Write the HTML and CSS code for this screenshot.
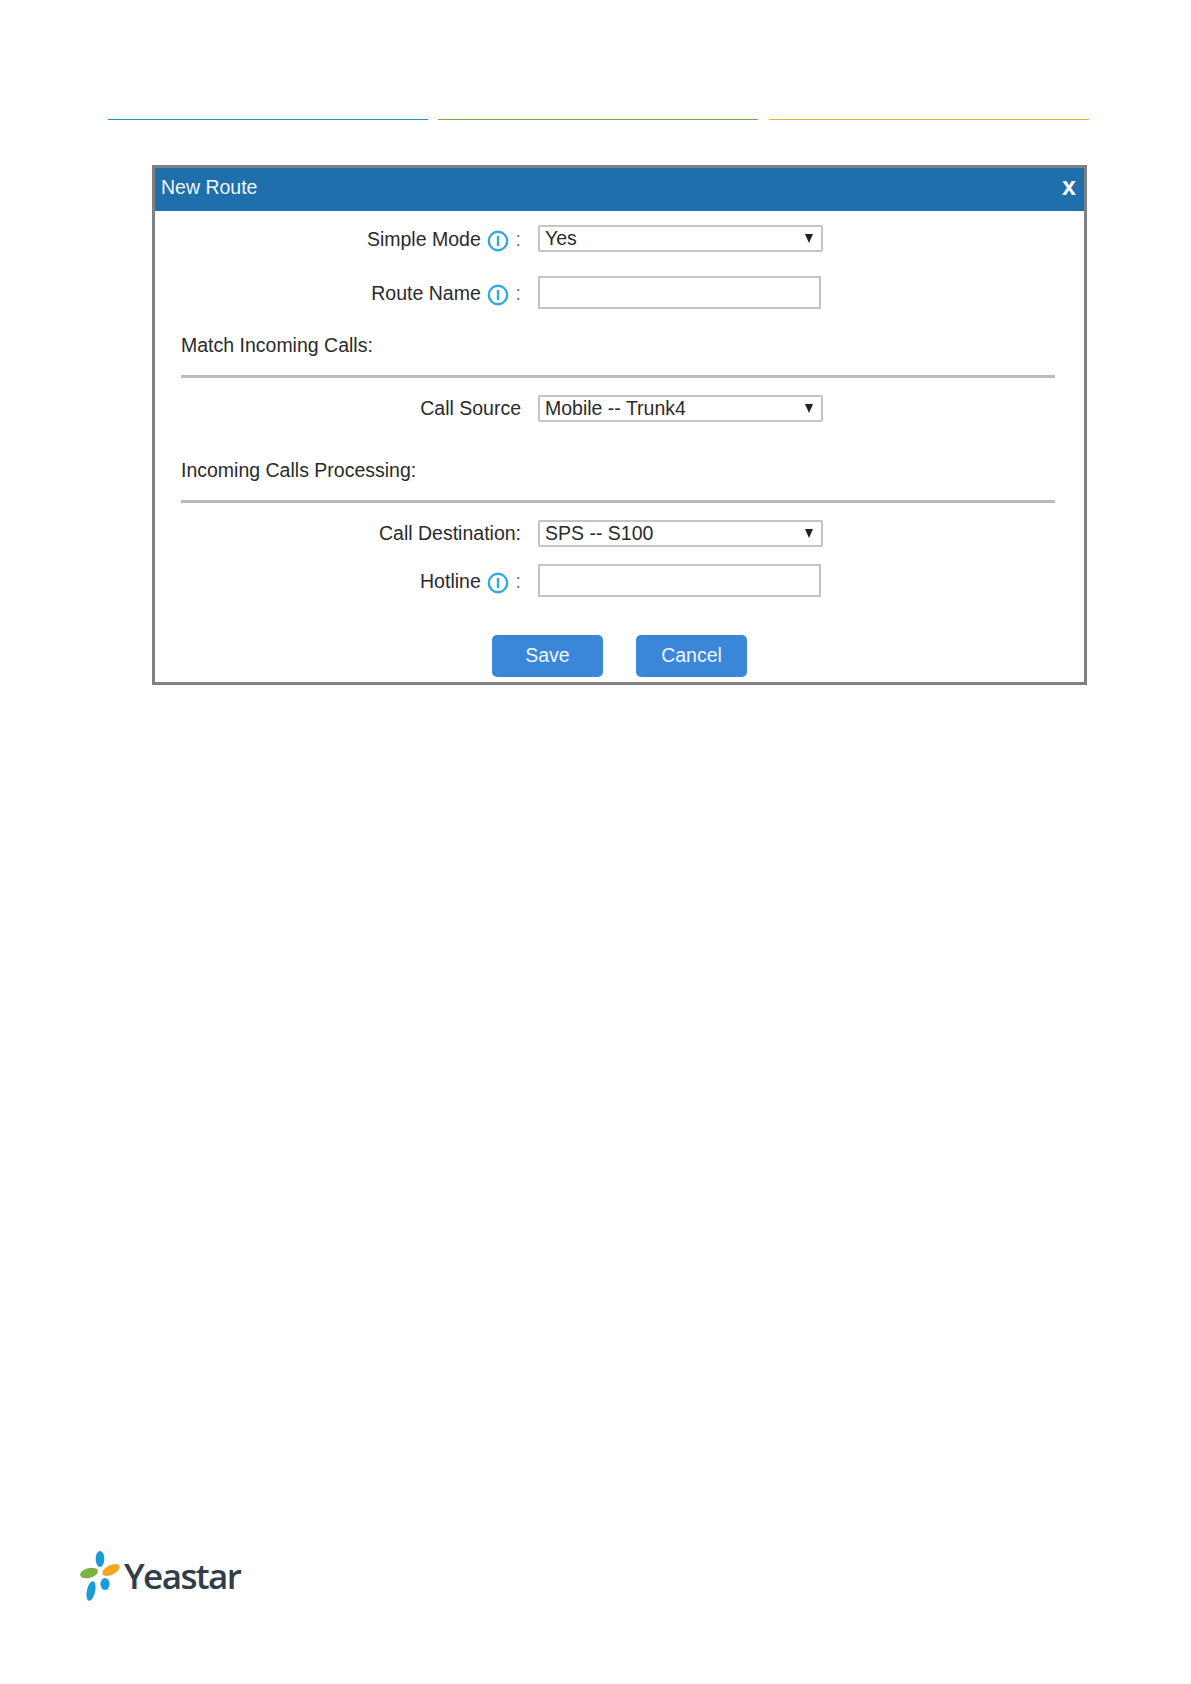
FILE: index.html
```html
<!DOCTYPE html>
<html lang="en">
<head>
  <meta charset="UTF-8" />
  <title>New Route</title>
  <link rel="stylesheet" href="styles.css">
</head>
<body>

  <div class="top-lines">
    <div class="line blue"></div>
    <div class="line green"></div>
    <div class="line orange"></div>
  </div>

  <div class="dialog">
    <div class="dialog-title">
      <span>New Route</span>
      <span class="close">x</span>
    </div>

    <div class="form-row row-mode">
      <label class="field-label icon-label">Simple Mode
        <svg class="info" viewBox="0 0 22 22"><circle cx="11" cy="11" r="9.2"/><path d="M11 6v10"/></svg>
        <span class="colon">:</span></label>
      <div class="select-box">
        <select><option>Yes</option></select>
        <span class="arrow"></span>
      </div>
    </div>

    <div class="form-row row-name">
      <label class="field-label icon-label">Route Name
        <svg class="info" viewBox="0 0 22 22"><circle cx="11" cy="11" r="9.2"/><path d="M11 6v10"/></svg>
        <span class="colon">:</span></label>
      <input type="text" />
    </div>

    <div class="section-title title-match">Match Incoming Calls:</div>
    <hr />

    <div class="form-row row-source">
      <label class="field-label">Call Source</label>
      <div class="select-box">
        <select><option>Mobile -- Trunk4</option></select>
        <span class="arrow"></span>
      </div>
    </div>

    <div class="section-title title-process">Incoming Calls Processing:</div>
    <hr />

    <div class="form-row row-dest">
      <label class="field-label">Call Destination:</label>
      <div class="select-box">
        <select><option>SPS -- S100</option></select>
        <span class="arrow"></span>
      </div>
    </div>

    <div class="form-row row-hotline">
      <label class="field-label icon-label">Hotline
        <svg class="info" viewBox="0 0 22 22"><circle cx="11" cy="11" r="9.2"/><path d="M11 6v10"/></svg>
        <span class="colon">:</span></label>
      <input type="text" />
    </div>

    <div class="buttons">
      <button>Save</button>
      <button>Cancel</button>
    </div>
  </div>

  <div class="logo">
    <svg class="logo-mark" viewBox="0 0 44 54">
      <ellipse cx="22" cy="11" rx="4.3" ry="8" fill="#1a9ad6"/>
      <ellipse cx="11" cy="25" rx="9.2" ry="5" fill="#7cb342" transform="rotate(-14 11 25)"/>
      <ellipse cx="33" cy="22" rx="9.5" ry="4.8" fill="#f5a81c" transform="rotate(-27 33 22)"/>
      <ellipse cx="27" cy="36" rx="4.6" ry="6" fill="#1a9ad6"/>
      <ellipse cx="13" cy="43" rx="4.2" ry="10" fill="#1a9ad6" transform="rotate(12 13 43)"/>
    </svg>
    <span class="logo-text">Yeastar</span>
  </div>

</body>
</html>
```

FILE: styles.css
```css
body {
  margin: 0;
  background: #fff;
  font-family: "Liberation Sans", Arial, sans-serif;
  font-size: 19.5px;
  color: #2b2b2b;
}
.top-lines {
  display: flex;
  gap: 10px;
  padding: 119px 0 0 108px;
}
.line {
  width: 320px;
  height: 1px;
}
.blue { background: #1a94cf; }
.green { background: #7ba83c; }
.orange { background: #f0ae2a; margin-left: 1px; }

.dialog {
  box-sizing: border-box;
  width: 935px;
  height: 520px;
  margin: 45px 0 0 152px;
  border: 3px solid #808080;
}
.dialog-title {
  display: flex;
  justify-content: space-between;
  align-items: center;
  box-sizing: border-box;
  height: 43px;
  padding: 0 8px 4px 6px;
  background: #206fad;
  color: #f2f6fa;
}
.close {
  font-weight: bold;
  font-size: 25px;
  line-height: 25px;
  padding-bottom: 3px;
  color: #fff;
}
.form-row {
  display: flex;
  align-items: center;
  gap: 17px;
}
.field-label {
  box-sizing: border-box;
  width: 366px;
  text-align: right;
  white-space: nowrap;
}
.icon-label {
  padding-top: 2px;
}
.info {
  width: 22px;
  height: 22px;
  margin: 0 1px 0 1px;
  vertical-align: -6px;
  fill: none;
  stroke: #35a9d6;
  stroke-width: 2.4;
}
.colon {
  color: #777;
}
.row-mode { margin-top: 14px; }
.row-name { margin-top: 24px; }
.row-source { margin-top: 17px; }
.row-dest { margin-top: 17px; }
.row-hotline { margin-top: 17px; }

select, input {
  box-sizing: border-box;
  font: inherit;
  color: #2b2b2b;
  background: #fff;
  border: 2px solid #c4c4c4;
  border-radius: 2px;
}
input {
  width: 283px;
  height: 33px;
  border-radius: 0;
}
.select-box {
  position: relative;
  width: 285px;
  height: 27px;
}
select {
  appearance: none;
  width: 100%;
  height: 100%;
  padding: 0 0 2px 5px;
}
.arrow {
  position: absolute;
  right: 10px;
  top: 9px;
  border-left: 4.5px solid transparent;
  border-right: 4.5px solid transparent;
  border-top: 9px solid #222;
}
.section-title {
  margin-left: 26px;
  line-height: 22px;
}
.title-match { margin-top: 25px; }
.title-process { margin-top: 37px; }
hr {
  height: 3px;
  margin: 19px 29px 0 26px;
  border: 0;
  background: #bbb;
}
.buttons {
  display: flex;
  gap: 33px;
  margin: 38px 0 0 337px;
}
button {
  width: 111px;
  height: 42px;
  padding: 0 0 1px;
  font: inherit;
  color: #f2f6fa;
  background: #3a87d9;
  border: 0;
  border-radius: 5px;
}

.logo {
  display: flex;
  align-items: center;
  margin: 863px 0 0 78px;
  height: 54px;
}
.logo-mark {
  width: 44px;
  height: 54px;
}
.logo-text {
  margin-left: 2px;
  font-family: "Open Sans", sans-serif;
  font-weight: 600;
  font-size: 35px;
  letter-spacing: -1.6px;
  color: #2f3e48;
}
```
